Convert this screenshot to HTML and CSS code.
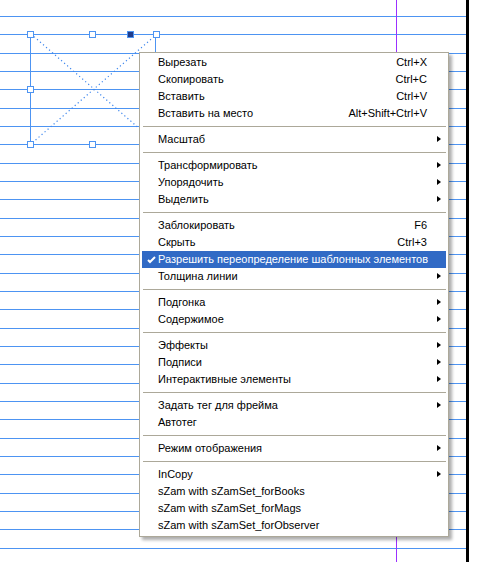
FILE: index.html
```html
<!DOCTYPE html>
<html lang="ru">
<head>
<meta charset="utf-8">
<title>Menu</title>
<link rel="stylesheet" href="styles.css">
</head>
<body>
<div class="page">
  <div class="canvas">
    <div class="grid">
      <div class="gl"></div><div class="gl"></div><div class="gl"></div><div class="gl"></div><div class="gl"></div>
      <div class="gl"></div><div class="gl"></div><div class="gl"></div><div class="gl"></div><div class="gl"></div>
      <div class="gl"></div><div class="gl"></div><div class="gl"></div><div class="gl"></div><div class="gl"></div>
      <div class="gl"></div><div class="gl"></div><div class="gl"></div><div class="gl"></div><div class="gl"></div>
      <div class="gl"></div><div class="gl"></div><div class="gl"></div><div class="gl"></div><div class="gl"></div>
      <div class="gl"></div><div class="gl"></div><div class="gl"></div><div class="gl"></div><div class="gl"></div>
    </div>
    <div class="guide"></div>
    <div class="frame">
      <svg class="cross" width="126" height="110" viewBox="0 0 126 110">
        <line x1="0" y1="0" x2="126" y2="110" />
        <line x1="126" y1="0" x2="0" y2="110" />
      </svg>
    </div>
    <div class="handle h-tl"></div>
    <div class="handle h-tm"></div>
    <div class="handle h-tr"></div>
    <div class="handle h-ml"></div>
    <div class="handle h-bl"></div>
    <div class="handle h-bm"></div>
    <div class="anchor"></div>

    <div class="menu">
      <div class="item"><span class="chk"></span><span class="lbl">Вырезать</span><span class="sc">Ctrl+X</span><span class="arr"></span></div>
      <div class="item"><span class="chk"></span><span class="lbl">Скопировать</span><span class="sc">Ctrl+C</span><span class="arr"></span></div>
      <div class="item"><span class="chk"></span><span class="lbl">Вставить</span><span class="sc">Ctrl+V</span><span class="arr"></span></div>
      <div class="item"><span class="chk"></span><span class="lbl">Вставить на место</span><span class="sc">Alt+Shift+Ctrl+V</span><span class="arr"></span></div>
      <div class="sep"></div>
      <div class="item"><span class="chk"></span><span class="lbl">Масштаб</span><span class="sc"></span><span class="arr sub"></span></div>
      <div class="sep"></div>
      <div class="item"><span class="chk"></span><span class="lbl">Трансформировать</span><span class="sc"></span><span class="arr sub"></span></div>
      <div class="item"><span class="chk"></span><span class="lbl">Упорядочить</span><span class="sc"></span><span class="arr sub"></span></div>
      <div class="item"><span class="chk"></span><span class="lbl">Выделить</span><span class="sc"></span><span class="arr sub"></span></div>
      <div class="sep"></div>
      <div class="item"><span class="chk"></span><span class="lbl">Заблокировать</span><span class="sc">F6</span><span class="arr"></span></div>
      <div class="item"><span class="chk"></span><span class="lbl">Скрыть</span><span class="sc">Ctrl+3</span><span class="arr"></span></div>
      <div class="item active"><span class="chk"><svg width="9" height="8" viewBox="0 0 9 8"><path d="M1 4 L3 6 L8 1" fill="none" stroke="#fff" stroke-width="2"/></svg></span><span class="lbl">Разрешить переопределение шаблонных элементов</span><span class="sc"></span><span class="arr"></span></div>
      <div class="item"><span class="chk"></span><span class="lbl">Толщина линии</span><span class="sc"></span><span class="arr sub"></span></div>
      <div class="sep"></div>
      <div class="item"><span class="chk"></span><span class="lbl">Подгонка</span><span class="sc"></span><span class="arr sub"></span></div>
      <div class="item"><span class="chk"></span><span class="lbl">Содержимое</span><span class="sc"></span><span class="arr sub"></span></div>
      <div class="sep"></div>
      <div class="item"><span class="chk"></span><span class="lbl">Эффекты</span><span class="sc"></span><span class="arr sub"></span></div>
      <div class="item"><span class="chk"></span><span class="lbl">Подписи</span><span class="sc"></span><span class="arr sub"></span></div>
      <div class="item"><span class="chk"></span><span class="lbl">Интерактивные элементы</span><span class="sc"></span><span class="arr sub"></span></div>
      <div class="sep"></div>
      <div class="item"><span class="chk"></span><span class="lbl">Задать тег для фрейма</span><span class="sc"></span><span class="arr sub"></span></div>
      <div class="item"><span class="chk"></span><span class="lbl">Автотег</span><span class="sc"></span><span class="arr"></span></div>
      <div class="sep"></div>
      <div class="item"><span class="chk"></span><span class="lbl">Режим отображения</span><span class="sc"></span><span class="arr sub"></span></div>
      <div class="sep"></div>
      <div class="item"><span class="chk"></span><span class="lbl">InCopy</span><span class="sc"></span><span class="arr sub"></span></div>
      <div class="item"><span class="chk"></span><span class="lbl">sZam with sZamSet_forBooks</span><span class="sc"></span><span class="arr"></span></div>
      <div class="item"><span class="chk"></span><span class="lbl">sZam with sZamSet_forMags</span><span class="sc"></span><span class="arr"></span></div>
      <div class="item"><span class="chk"></span><span class="lbl">sZam with sZamSet_forObserver</span><span class="sc"></span><span class="arr"></span></div>
    </div>
  </div>
  <div class="rule"></div>
  <div class="margin"></div>
</div>
</body>
</html>
```
FILE: styles.css
```css
html, body {
  margin: 0;
  padding: 0;
  background: #ffffff;
}

.page {
  display: flex;
  width: 483px;
  height: 562px;
  overflow: hidden;
}

.canvas {
  position: relative;
  width: 466px;
  height: 562px;
  flex: none;
}

.rule {
  width: 3px;
  height: 562px;
  background: #000000;
  flex: none;
}

.margin {
  flex: 1;
  background: #ffffff;
}

.grid {
  display: flex;
  flex-direction: column;
  padding-top: 16px;
}

.gl {
  height: 18.3333px;
  box-sizing: border-box;
  border-top: 1px solid #4d94f2;
  flex: none;
}

.guide {
  position: absolute;
  left: 396px;
  top: 0;
  width: 1px;
  height: 562px;
  background: #9b30ff;
}

.frame {
  position: absolute;
  left: 30px;
  top: 34px;
  width: 126px;
  height: 110px;
  border-left: 1px solid #4d94f2;
  border-right: 1px solid #4d94f2;
  box-sizing: border-box;
}

.cross {
  position: absolute;
  left: 0;
  top: 0;
  overflow: visible;
}

.cross line {
  stroke: #3d86ee;
  stroke-width: 1.2;
  stroke-dasharray: 1.2 2.8;
}

.handle {
  position: absolute;
  width: 5px;
  height: 5px;
  border: 1px solid #4d94f2;
  background: #ffffff;
}

.h-tl { left: 27px; top: 31px; }
.h-tm { left: 89px; top: 31px; }
.h-tr { left: 153px; top: 31px; }
.h-ml { left: 27px; top: 86px; }
.h-bl { left: 27px; top: 141px; }
.h-bm { left: 89px; top: 141px; }

.anchor {
  position: absolute;
  left: 127px;
  top: 31px;
  width: 5px;
  height: 5px;
  border: 1px solid #4d94f2;
  background: #1f3c8c;
}

.menu {
  position: absolute;
  left: 139px;
  top: 52px;
  width: 310px;
  box-sizing: border-box;
  border: 1px solid #aca899;
  background: #ffffff;
  padding: 1px 2px 2px 2px;
  box-shadow: 3px 3px 3px rgba(0, 0, 0, 0.32);
  font-family: "Liberation Sans", Arial, sans-serif;
  font-size: 11px;
  color: #000000;
}

.item {
  display: grid;
  grid-template-columns: 16px 1fr auto 19px;
  align-items: center;
  height: 17px;
  line-height: 17px;
  white-space: nowrap;
}

.item.active {
  background: #316ac5;
  color: #ffffff;
}

.chk {
  display: flex;
  align-items: center;
  justify-content: center;
  height: 17px;
  padding-left: 2px;
}

.chk svg {
  display: block;
}

.sc {
  text-align: right;
}

.arr {
  height: 17px;
  position: relative;
}

.arr.sub::after {
  content: "";
  position: absolute;
  left: 10px;
  top: 5px;
  width: 0;
  height: 0;
  border-top: 3.5px solid transparent;
  border-bottom: 3.5px solid transparent;
  border-left: 4px solid #000000;
}

.sep {
  height: 9px;
  display: flex;
  align-items: center;
  padding-left: 1px;
}

.sep::before {
  content: "";
  display: block;
  width: 100%;
  height: 1px;
  background: #aca899;
}
```
